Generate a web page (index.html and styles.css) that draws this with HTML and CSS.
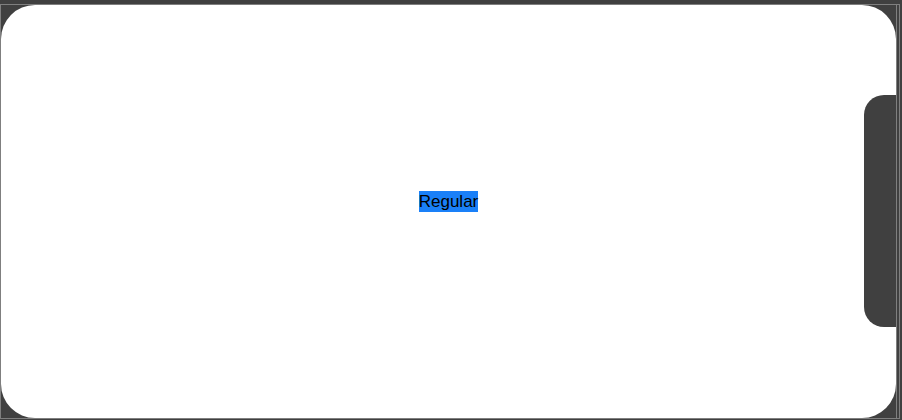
FILE: index.html
```html
<!DOCTYPE html>
<html>
<head>
<meta charset="utf-8">
<link rel="stylesheet" href="styles.css">
</head>
<body>
<div class="frame">
  <div class="screen-wrap">
    <div class="screen">
      <span class="label">Regular</span>
      <div class="notch"></div>
    </div>
  </div>
</div>
</body>
</html>
```
FILE: styles.css
```css
html, body {
  margin: 0;
  padding: 0;
  background: #404040;
  width: 902px;
  height: 420px;
  overflow: hidden;
}
.frame {
  margin-top: 4px;
  width: 900px;
  height: 415px;
  box-sizing: border-box;
  border: 1px solid #7f7f7f;
  display: flex;
  padding-right: 2px;
}
.screen-wrap {
  flex: 1;
  border-right: 1px solid #7f7f7f;
  display: flex;
}
.screen {
  flex: 1;
  position: relative;
  background: #ffffff;
  border-radius: 34px;
  display: flex;
  align-items: center;
  justify-content: center;
  padding-bottom: 20px;
}
.label {
  font-family: "Liberation Sans", Arial, sans-serif;
  font-size: 17px;
  line-height: 21px;
  color: #000;
  background: #1a80f8;
}
.notch {
  position: absolute;
  right: 0;
  top: 90px;
  width: 32px;
  height: 232px;
  background: #404040;
  border-radius: 20px 0 0 20px;
}
```
